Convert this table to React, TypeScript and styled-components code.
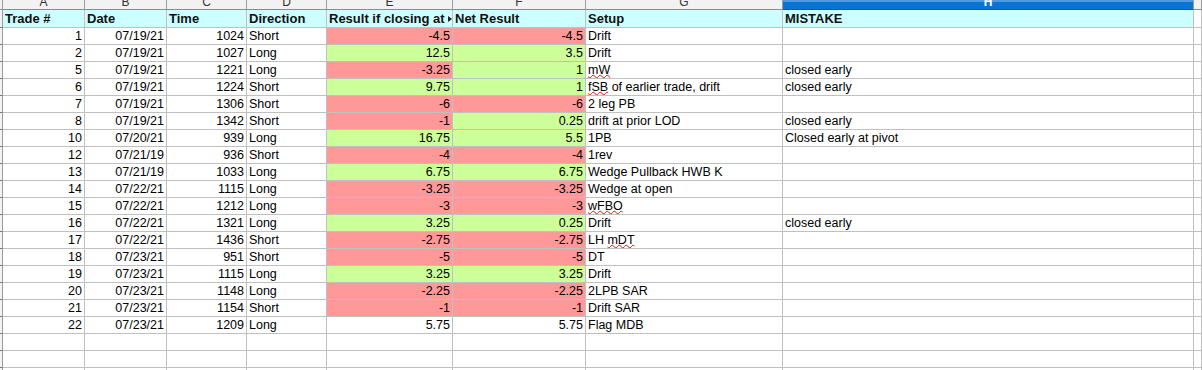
import React from "react";
import styled, { createGlobalStyle, css } from "styled-components";

const GlobalStyle = createGlobalStyle`
  html, body {
    margin: 0;
    padding: 0;
    background: #ffffff;
    overflow: hidden;
  }
  body {
    font-family: "Liberation Sans", Arial, sans-serif;
  }
`;

const COLS = "3px 82px 82px 80px 80px 126px 133px 197px 411px 1fr";

type Tone = "red" | "green" | "none";

type Trade = {
  no: number;
  date: string;
  time: number;
  dir: string;
  ifClosing: number;
  net: number;
  setup: string;
  mistake: string;
  plain?: boolean;
};

const trades: Trade[] = [
  { no: 1, date: "07/19/21", time: 1024, dir: "Short", ifClosing: -4.5, net: -4.5, setup: "Drift", mistake: "" },
  { no: 2, date: "07/19/21", time: 1027, dir: "Long", ifClosing: 12.5, net: 3.5, setup: "Drift", mistake: "" },
  { no: 5, date: "07/19/21", time: 1221, dir: "Long", ifClosing: -3.25, net: 1, setup: "{mW}", mistake: "closed early" },
  { no: 6, date: "07/19/21", time: 1224, dir: "Short", ifClosing: 9.75, net: 1, setup: "{fSB} of earlier trade, drift", mistake: "closed early" },
  { no: 7, date: "07/19/21", time: 1306, dir: "Short", ifClosing: -6, net: -6, setup: "2 leg PB", mistake: "" },
  { no: 8, date: "07/19/21", time: 1342, dir: "Short", ifClosing: -1, net: 0.25, setup: "drift at prior LOD", mistake: "closed early" },
  { no: 10, date: "07/20/21", time: 939, dir: "Long", ifClosing: 16.75, net: 5.5, setup: "1PB", mistake: "Closed early at pivot" },
  { no: 12, date: "07/21/19", time: 936, dir: "Short", ifClosing: -4, net: -4, setup: "1rev", mistake: "" },
  { no: 13, date: "07/21/19", time: 1033, dir: "Long", ifClosing: 6.75, net: 6.75, setup: "Wedge Pullback HWB K", mistake: "" },
  { no: 14, date: "07/22/21", time: 1115, dir: "Long", ifClosing: -3.25, net: -3.25, setup: "Wedge at open", mistake: "" },
  { no: 15, date: "07/22/21", time: 1212, dir: "Long", ifClosing: -3, net: -3, setup: "{wFBO}", mistake: "" },
  { no: 16, date: "07/22/21", time: 1321, dir: "Long", ifClosing: 3.25, net: 0.25, setup: "Drift", mistake: "closed early" },
  { no: 17, date: "07/22/21", time: 1436, dir: "Short", ifClosing: -2.75, net: -2.75, setup: "LH {mDT}", mistake: "" },
  { no: 18, date: "07/23/21", time: 951, dir: "Short", ifClosing: -5, net: -5, setup: "DT", mistake: "" },
  { no: 19, date: "07/23/21", time: 1115, dir: "Long", ifClosing: 3.25, net: 3.25, setup: "Drift", mistake: "" },
  { no: 20, date: "07/23/21", time: 1148, dir: "Long", ifClosing: -2.25, net: -2.25, setup: "2LPB SAR", mistake: "" },
  { no: 21, date: "07/23/21", time: 1154, dir: "Short", ifClosing: -1, net: -1, setup: "Drift SAR", mistake: "" },
  { no: 22, date: "07/23/21", time: 1209, dir: "Long", ifClosing: 5.75, net: 5.75, setup: "Flag MDB", mistake: "", plain: true },
];

const letters = ["A", "B", "C", "D", "E", "F", "G", "H", ""];

const Sheet = styled.div`
  width: 1202px;
  height: 370px;
  overflow: hidden;
  display: flex;
  flex-direction: column;
`;

const Row = styled.div<{ $height: number }>`
  display: grid;
  grid-template-columns: ${COLS};
  height: ${(p) => p.$height}px;
  flex: none;
`;

const ColHead = styled.div<{ $selected?: boolean }>`
  display: flex;
  align-items: flex-end;
  justify-content: center;
  overflow: hidden;
  box-sizing: border-box;
  background: #f2f2f2;
  border-right: 1px solid #9c9c9c;
  border-bottom: 1px solid #8a8a8a;
  color: #333333;
  font-size: 12px;
  line-height: 14px;
  ${(p) =>
    p.$selected &&
    css`
      background: linear-gradient(#4f9be0 0 2px, #0a74d4 2px);
      border-bottom-color: #0a5ea8;
      color: #ffffff;
      font-weight: bold;
    `}
`;

const Gutter = styled.div`
  box-sizing: border-box;
  background: #f2f2f2;
  border-right: 1px solid #9c9c9c;
  border-bottom: 1px solid #7a7a7a;
`;

const toneBg: Record<Tone, string> = {
  red: "#ff9999",
  green: "#ccff99",
  none: "#ffffff",
};

const Cell = styled.div<{ $right?: boolean; $tone?: Tone; $head?: boolean }>`
  position: relative;
  box-sizing: border-box;
  overflow: hidden;
  white-space: nowrap;
  padding: 0 2px 0 2px;
  border-right: 1px solid #c0c0c0;
  border-bottom: 1px solid #c0c0c0;
  background: ${(p) => toneBg[p.$tone || "none"]};
  color: #000000;
  font-size: 12.5px;
  line-height: 16px;
  text-align: ${(p) => (p.$right ? "right" : "left")};
  ${(p) =>
    p.$head &&
    css`
      background: #ccffff;
      font-weight: bold;
      font-size: 13px;
      line-height: 17px;
      color: #111111;
    `}
`;

const Overflow = styled.span`
  position: absolute;
  right: 0;
  top: 6px;
  width: 0;
  height: 0;
  border-top: 3px solid transparent;
  border-bottom: 3px solid transparent;
  border-left: 4px solid #222222;
`;

const Misspelt = styled.span`
  text-decoration-line: underline;
  text-decoration-style: wavy;
  text-decoration-color: #e01010;
  text-decoration-thickness: 1px;
  text-decoration-skip-ink: none;
  text-underline-offset: 0px;
`;

function toneOf(v: number, plain?: boolean): Tone {
  if (plain) return "none";
  return v < 0 ? "red" : "green";
}

function SetupText({ text }: { text: string }) {
  const parts = text.split(/(\{[^}]+\})/).filter(Boolean);
  return (
    <>
      {parts.map((p, i) =>
        p.startsWith("{") ? <Misspelt key={i}>{p.slice(1, -1)}</Misspelt> : <React.Fragment key={i}>{p}</React.Fragment>
      )}
    </>
  );
}

export default function App() {
  return (
    <>
      <GlobalStyle />
      <Sheet>
        <Row $height={10}>
          <ColHead />
          {letters.map((l, i) => (
            <ColHead key={i} $selected={l === "H"}>
              {l}
            </ColHead>
          ))}
        </Row>

        <Row $height={18}>
          <Gutter />
          <Cell $head>Trade #</Cell>
          <Cell $head>Date</Cell>
          <Cell $head>Time</Cell>
          <Cell $head>Direction</Cell>
          <Cell $head>
            Result if closing at
            <Overflow />
          </Cell>
          <Cell $head>Net Result</Cell>
          <Cell $head>Setup</Cell>
          <Cell $head>MISTAKE</Cell>
          <Cell />
        </Row>

        {trades.map((t) => (
          <Row $height={17} key={t.no}>
            <Gutter />
            <Cell $right>{t.no}</Cell>
            <Cell $right>{t.date}</Cell>
            <Cell $right>{t.time}</Cell>
            <Cell>{t.dir}</Cell>
            <Cell $right $tone={toneOf(t.ifClosing, t.plain)}>
              {t.ifClosing}
            </Cell>
            <Cell $right $tone={toneOf(t.net, t.plain)}>
              {t.net}
            </Cell>
            <Cell>
              <SetupText text={t.setup} />
            </Cell>
            <Cell>{t.mistake}</Cell>
            <Cell />
          </Row>
        ))}

        {[0, 1, 2].map((i) => (
          <Row $height={17} key={"empty" + i}>
            <Gutter />
            {letters.map((_, j) => (
              <Cell key={j} />
            ))}
          </Row>
        ))}
      </Sheet>
    </>
  );
}
